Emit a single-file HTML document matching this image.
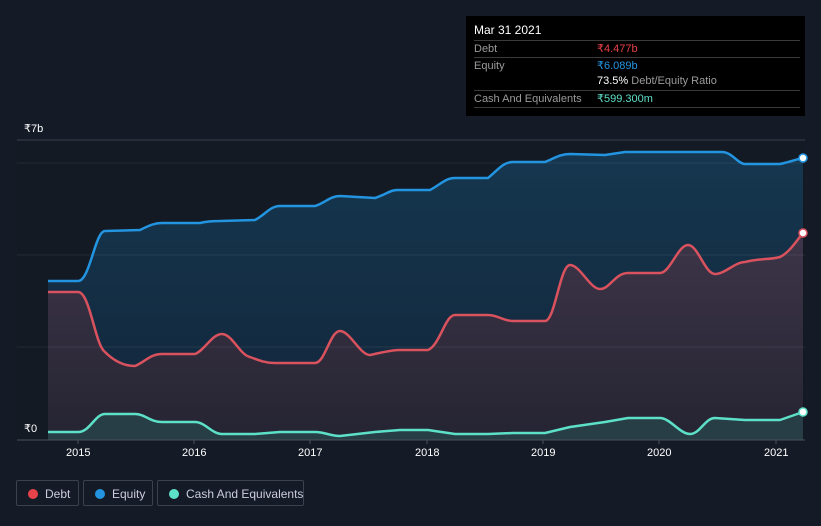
<!DOCTYPE html>
<html><head><style>
body{margin:0;width:821px;height:526px;background:#151b26;font-family:"Liberation Sans",sans-serif;overflow:hidden;position:relative}
.tip{position:absolute;left:466px;top:16px;width:339px;height:100px;background:#000;color:#fff;font-size:11px}
.row{position:absolute;left:8px;width:326px;border-top:1px solid #3a3a3a;height:16px;line-height:16px;color:#9a9a9a;white-space:nowrap}
.row span{position:absolute;left:123px}
.leg{position:absolute;top:480px;height:26px;border:1px solid #3c424d;border-radius:2px;color:#ccd;font-size:12px;line-height:26px;box-sizing:border-box;white-space:nowrap}
.leg i{position:absolute;left:11px;top:8px;width:10px;height:10px;border-radius:50%}
.ax{position:absolute;color:#fff;font-size:11px}
</style></head><body>
<svg width="821" height="526" style="position:absolute;left:0;top:0">
<defs>
<linearGradient id="ge" x1="0" y1="0" x2="0" y2="1"><stop offset="0" stop-color="#15374f"/><stop offset="1" stop-color="#12253a"/></linearGradient>
<linearGradient id="gd" x1="0" y1="0" x2="0" y2="1"><stop offset="0" stop-color="#3d3548"/><stop offset="1" stop-color="#252432"/></linearGradient>
</defs>
<rect x="17" y="140" width="788" height="300" fill="#131a24"/>
<line x1="17" y1="140" x2="805" y2="140" stroke="#3a404a"/>
<path fill="url(#ge)" d="M48,281 L78,281 C90,281 95,231 105,231 L140,230 C150,225 155,223 162,223 L200,223 C208,221 215,221 220,221 L255,220 C265,215 270,206 280,206 L315,206 C325,203 330,196 340,196 L375,198 C385,195 390,190 397,190 L430,190 C440,185 445,178 455,178 L488,178 C498,170 503,162 513,162 L545,162 C555,158 560,154 570,154 L605,155 L625,152 L722,152 C732,152 738,164 745,164 L780,164 C790,162 797,159 803,158 L803,440 L48,440Z"/>
<path fill="url(#gd)" d="M48,292 L78,292 C90,292 95,345 105,352 C115,362 125,366 135,366 C145,362 150,354 162,354 L195,354 C205,350 212,334 222,334 C232,334 240,355 250,357 C258,360 265,363 275,363 L315,363 C325,363 330,331 340,331 C350,331 360,355 370,355 C380,353 390,350 400,350 L428,350 C440,345 445,315 455,315 L488,315 C498,315 503,321 513,321 L545,321 C555,321 560,265 570,265 C580,265 590,289 600,289 C610,289 615,273 628,273 L660,273 C670,273 678,245 688,245 C698,245 705,274 715,274 C725,274 735,262 745,262 C760,258 770,260 780,257 C790,252 797,240 803,233 L803,440 L48,440Z"/>
<line x1="17" y1="163" x2="805" y2="163" stroke="#ffffff" stroke-opacity="0.07"/>
<line x1="17" y1="255" x2="805" y2="255" stroke="#ffffff" stroke-opacity="0.07"/>
<line x1="17" y1="347" x2="805" y2="347" stroke="#ffffff" stroke-opacity="0.07"/>
<path fill="#28454b" fill-opacity="0.8" d="M48,432 L78,432 C90,432 95,414 105,414 L135,414 C145,414 150,422 162,422 L195,422 C205,422 212,434 222,434 L255,434 L280,432 L315,432 C325,432 330,436 340,436 L375,432 L400,430 L428,430 L455,434 L488,434 L513,433 L545,433 L570,427 L605,422 L628,418 L660,418 C670,418 680,434 690,434 C700,434 705,418 715,418 L745,420 L780,420 L803,412 L803,440 L48,440Z"/>
<g fill="none" stroke-width="2.5" stroke-linejoin="round">
<path stroke="#2394e0" d="M48,281 L78,281 C90,281 95,231 105,231 L140,230 C150,225 155,223 162,223 L200,223 C208,221 215,221 220,221 L255,220 C265,215 270,206 280,206 L315,206 C325,203 330,196 340,196 L375,198 C385,195 390,190 397,190 L430,190 C440,185 445,178 455,178 L488,178 C498,170 503,162 513,162 L545,162 C555,158 560,154 570,154 L605,155 L625,152 L722,152 C732,152 738,164 745,164 L780,164 C790,162 797,159 803,158"/>
<path stroke="#d9525e" d="M48,292 L78,292 C90,292 95,345 105,352 C115,362 125,366 135,366 C145,362 150,354 162,354 L195,354 C205,350 212,334 222,334 C232,334 240,355 250,357 C258,360 265,363 275,363 L315,363 C325,363 330,331 340,331 C350,331 360,355 370,355 C380,353 390,350 400,350 L428,350 C440,345 445,315 455,315 L488,315 C498,315 503,321 513,321 L545,321 C555,321 560,265 570,265 C580,265 590,289 600,289 C610,289 615,273 628,273 L660,273 C670,273 678,245 688,245 C698,245 705,274 715,274 C725,274 735,262 745,262 C760,258 770,260 780,257 C790,252 797,240 803,233"/>
<path stroke="#5de0c8" d="M48,432 L78,432 C90,432 95,414 105,414 L135,414 C145,414 150,422 162,422 L195,422 C205,422 212,434 222,434 L255,434 L280,432 L315,432 C325,432 330,436 340,436 L375,432 L400,430 L428,430 L455,434 L488,434 L513,433 L545,433 L570,427 L605,422 L628,418 L660,418 C670,418 680,434 690,434 C700,434 705,418 715,418 L745,420 L780,420 L803,412"/>
</g>
<circle cx="803" cy="158" r="4" fill="#fff" stroke="#2394e0" stroke-width="1.5"/>
<circle cx="803" cy="233" r="4" fill="#fff" stroke="#d9525e" stroke-width="1.5"/>
<circle cx="803" cy="412" r="4" fill="#fff" stroke="#5de0c8" stroke-width="1.5"/>
<line x1="17" y1="440" x2="805" y2="440" stroke="#4a505a"/>
<g stroke="#4a505a"><line x1="78" y1="440" x2="78" y2="444"/><line x1="194" y1="440" x2="194" y2="444"/><line x1="310" y1="440" x2="310" y2="444"/><line x1="427" y1="440" x2="427" y2="444"/><line x1="543" y1="440" x2="543" y2="444"/><line x1="659" y1="440" x2="659" y2="444"/><line x1="776" y1="440" x2="776" y2="444"/></g>
</svg>
<div class="ax" style="left:24px;top:122px">₹7b</div>
<div class="ax" style="left:24px;top:422px">₹0</div>
<div class="ax" style="left:66px;top:447px">2015</div>
<div class="ax" style="left:182px;top:447px">2016</div>
<div class="ax" style="left:298px;top:447px">2017</div>
<div class="ax" style="left:415px;top:447px">2018</div>
<div class="ax" style="left:531px;top:447px">2019</div>
<div class="ax" style="left:647px;top:447px">2020</div>
<div class="ax" style="left:764px;top:447px">2021</div>
<div class="tip">
<div style="position:absolute;left:8px;top:7px;color:#fff;font-size:12px">Mar 31 2021</div>
<div class="row" style="top:24px">Debt<span style="color:#e8424a">₹4.477b</span></div>
<div class="row" style="top:41px">Equity<span style="color:#2394e0">₹6.089b</span></div>
<div class="row" style="top:57px;border-top:none"><span><b style="color:#fff;font-weight:normal">73.5%</b> Debt/Equity Ratio</span></div>
<div class="row" style="top:74px">Cash And Equivalents<span style="color:#5de0c8">₹599.300m</span></div>
<div class="row" style="top:91px;height:0"></div>
</div>
<div class="leg" style="left:16px;width:63px"><i style="background:#e8424a"></i><span style="position:absolute;left:28px">Debt</span></div>
<div class="leg" style="left:83px;width:70px"><i style="background:#2394e0"></i><span style="position:absolute;left:28px">Equity</span></div>
<div class="leg" style="left:157px;width:147px"><i style="background:#5de0c8"></i><span style="position:absolute;left:28px">Cash And Equivalents</span></div>
</body></html>
